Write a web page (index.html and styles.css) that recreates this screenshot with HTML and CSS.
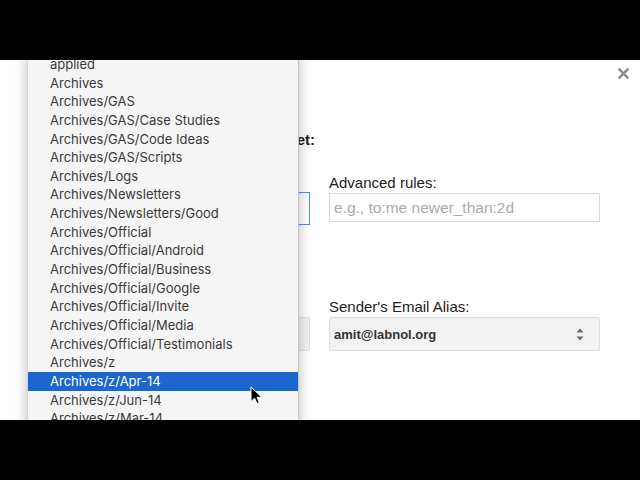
FILE: index.html
```html
<!DOCTYPE html>
<html lang="en">
<head>
<meta charset="utf-8">
<title>Gmail to Sheet</title>
<link rel="stylesheet" href="styles.css">
</head>
<body>
<div class="viewport">
  <button class="close" aria-label="Close">
    <svg width="13" height="13" viewBox="0 0 13 13"><path d="M1.6 1.6 L11.4 11.4 M11.4 1.6 L1.6 11.4" stroke="#8c8c8c" stroke-width="2.5" stroke-linecap="butt"/></svg>
  </button>
  <div class="form">
    <div class="row row-head">
      <div class="heading">Sheet:</div>
    </div>
    <div class="row">
      <div class="field">
        <div class="label">&nbsp;</div>
        <div class="control focus"></div>
      </div>
      <div class="field">
        <div class="label">Advanced rules:</div>
        <input class="input" type="text" placeholder="e.g., to:me newer_than:2d">
      </div>
    </div>
    <div class="row row-gap">
      <div class="field">
        <div class="label">&nbsp;</div>
        <div class="select"></div>
      </div>
      <div class="field">
        <div class="label">Sender's Email Alias:</div>
        <div class="select">
          <span class="select-text">amit@labnol.org</span>
          <svg class="arrows" width="8" height="13" viewBox="0 0 8 13"><path d="M4 0.5 L7.5 4.5 L0.5 4.5 Z M0.5 8.5 L7.5 8.5 L4 12.5 Z" fill="#6b6b6b"/></svg>
        </div>
      </div>
    </div>
  </div>
  <ul class="menu">
    <li>applied</li>
    <li>Archives</li>
    <li>Archives/GAS</li>
    <li>Archives/GAS/Case Studies</li>
    <li>Archives/GAS/Code Ideas</li>
    <li>Archives/GAS/Scripts</li>
    <li>Archives/Logs</li>
    <li>Archives/Newsletters</li>
    <li>Archives/Newsletters/Good</li>
    <li>Archives/Official</li>
    <li>Archives/Official/Android</li>
    <li>Archives/Official/Business</li>
    <li>Archives/Official/Google</li>
    <li>Archives/Official/Invite</li>
    <li>Archives/Official/Media</li>
    <li>Archives/Official/Testimonials</li>
    <li>Archives/z</li>
    <li class="selected">Archives/z/Apr-14</li>
    <li>Archives/z/Jun-14</li>
    <li>Archives/z/Mar-14</li>
  </ul>
  <svg class="cursor" width="13" height="19" viewBox="0 0 13 19"><path d="M1 1 L1 15.5 L4.6 12.2 L7 17.6 L9.3 16.6 L7 11.3 L11.8 11.3 Z" fill="#000" stroke="#fff" stroke-width="1" stroke-linejoin="round"/></svg>
</div>
</body>
</html>
```

FILE: styles.css
```css
html, body {
  margin: 0;
  padding: 0;
  background: #000;
  width: 640px;
  height: 480px;
  overflow: hidden;
}
.viewport {
  position: relative;
  margin-top: 60px;
  height: 360px;
  background: #fff;
  overflow: hidden;
  font-family: "Liberation Sans", Arial, sans-serif;
  color: #222;
}
.close {
  position: absolute;
  left: 617px;
  top: 7px;
  width: 13px;
  height: 13px;
  padding: 0;
  border: 0;
  background: none;
  display: block;
}
.close svg { display: block; }
.form {
  display: flex;
  flex-direction: column;
  padding: 71px 0 0 40px;
}
.row {
  display: grid;
  grid-template-columns: 270px 271px;
  column-gap: 19px;
  align-items: start;
}
.row-head {
  height: 18px;
  margin-bottom: 25px;
}
.row-gap {
  margin-top: 73px;
}
.heading {
  grid-column: 1;
  justify-self: end;
  margin-right: -5px;
  white-space: nowrap;
  font-weight: bold;
  font-size: 15px;
  line-height: 18px;
  color: #222;
}
.field {
  display: flex;
  flex-direction: column;
}
.label {
  font-size: 15px;
  line-height: 18px;
  margin-bottom: 1px;
  color: #222;
}
.control {
  box-sizing: border-box;
  height: 33px;
  border: 1px solid #dcdcdc;
  background: #fff;
}
.control.focus {
  margin-top: -1px;
  border-color: #4d8ef0;
}
.input {
  box-sizing: border-box;
  width: 271px;
  height: 29px;
  margin: 0;
  border: 1px solid #d9d9d9;
  padding: 0 4px;
  font-family: "Liberation Sans", Arial, sans-serif;
  font-size: 15.5px;
  color: #222;
  background: #fff;
  outline: none;
}
.input::placeholder {
  color: #a9a9a9;
}
.select {
  box-sizing: border-box;
  height: 34px;
  border: 1px solid #dedede;
  border-radius: 2px;
  background: #f2f2f2;
  display: flex;
  align-items: center;
  justify-content: space-between;
  padding: 0 15px 0 4px;
}
.select-text {
  font-weight: bold;
  font-size: 13px;
  color: #333;
}
.arrows { display: block; }
.menu {
  position: absolute;
  left: 27px;
  top: -5px;
  width: 272px;
  box-sizing: border-box;
  margin: 0;
  padding: 0;
  list-style: none;
  background: #f5f5f5;
  border-left: 1px solid #d4d4d4;
  border-right: 1px solid #c6c6c6;
  box-shadow: 0 2px 12px rgba(0, 0, 0, 0.28);
  font-family: Inter, "Liberation Sans", sans-serif;
  font-size: 13px;
  color: #3a3a3a;
}
.menu li {
  height: 18.65px;
  line-height: 18.65px;
  padding-left: 22px;
  white-space: nowrap;
}
.menu li.selected {
  background: #1c66d0;
  color: #fff;
}
.cursor {
  position: absolute;
  left: 250px;
  top: 326px;
}
```
